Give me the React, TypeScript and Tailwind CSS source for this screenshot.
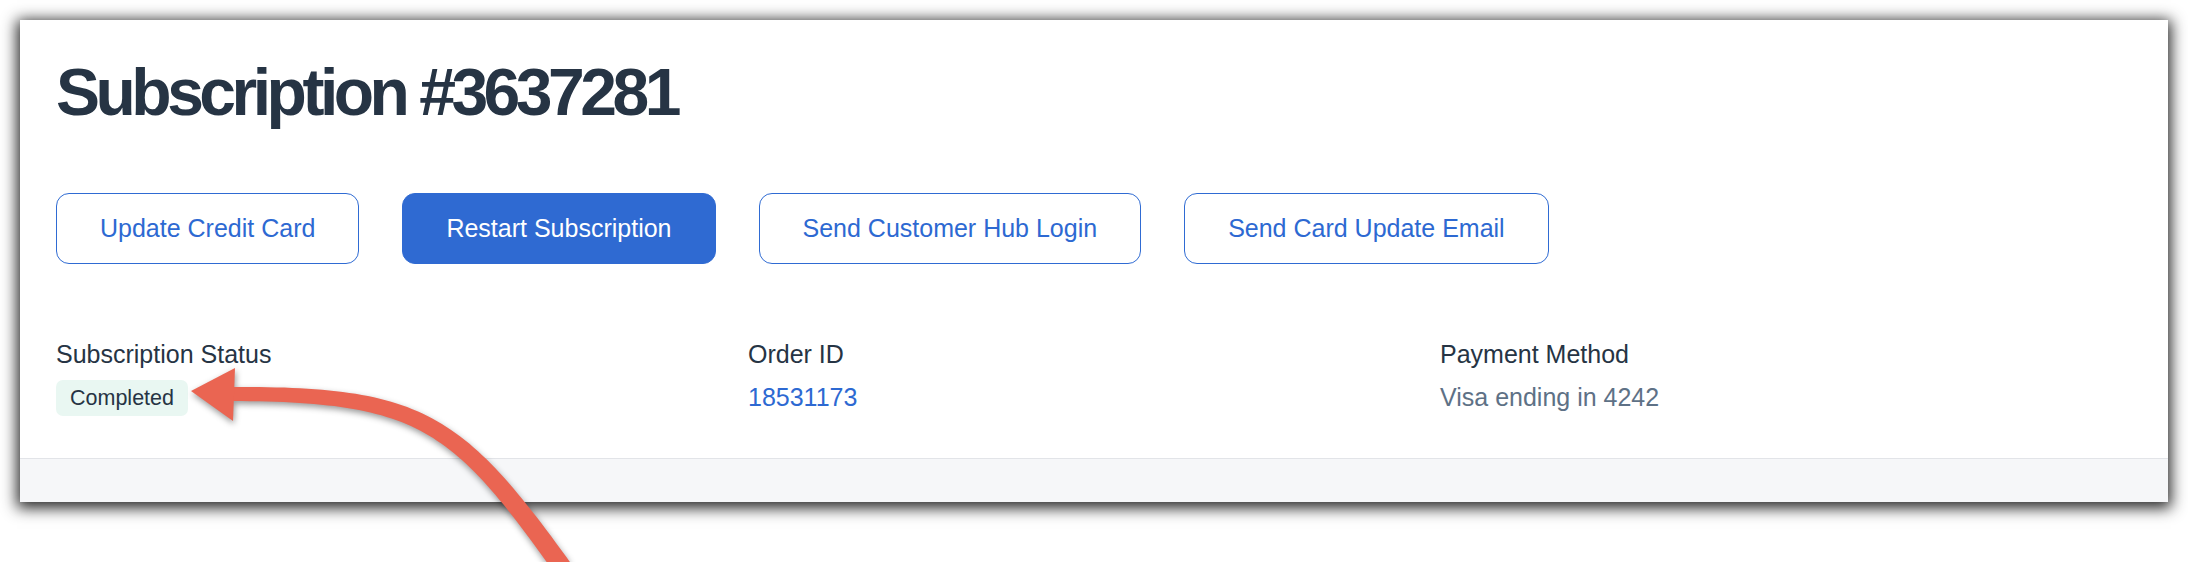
import React from "react";

type P = [number, number];

function arrowPath(): string {
  const p0: P = [564, 570];
  const p1: P = [457, 420];
  const p2: P = [420, 394];
  const p3: P = [232, 394];
  const left: P[] = [];
  const right: P[] = [];
  const N = 60;
  for (let i = 0; i <= N; i++) {
    const t = i / N;
    const mt = 1 - t;
    const x = mt * mt * mt * p0[0] + 3 * mt * mt * t * p1[0] + 3 * mt * t * t * p2[0] + t * t * t * p3[0];
    const y = mt * mt * mt * p0[1] + 3 * mt * mt * t * p1[1] + 3 * mt * t * t * p2[1] + t * t * t * p3[1];
    const dx = 3 * mt * mt * (p1[0] - p0[0]) + 6 * mt * t * (p2[0] - p1[0]) + 3 * t * t * (p3[0] - p2[0]);
    const dy = 3 * mt * mt * (p1[1] - p0[1]) + 6 * mt * t * (p2[1] - p1[1]) + 3 * t * t * (p3[1] - p2[1]);
    const len = Math.hypot(dx, dy) || 1;
    const nx = -dy / len;
    const ny = dx / len;
    const w = (19 - 5 * t) / 2;
    left.push([x + nx * w, y + ny * w]);
    right.push([x - nx * w, y - ny * w]);
  }
  const pts = [...left, ...right.reverse()];
  return "M" + pts.map((p) => `${p[0].toFixed(1)} ${p[1].toFixed(1)}`).join(" L") + " Z";
}

function Label({ children }: { children: React.ReactNode }) {
  return <div className="text-[25px] leading-[30px] text-[#263444]">{children}</div>;
}

export default function App() {
  const d = arrowPath();
  return (
    <div
      className="relative w-full h-[562px] bg-white overflow-hidden"
      style={{ fontFamily: '"Liberation Sans", Arial, Helvetica, sans-serif' }}
    >
      <div className="mx-[20px] mt-[20px] bg-white shadow-[0_3px_14px_3px_rgba(0,0,0,0.85)]">
        <div className="px-[36px] pt-[39px] pb-[42px]">
          <h1 className="text-[66px] leading-[66px] font-bold tracking-[-4.5px] text-[#263444]">
            Subscription #3637281
          </h1>
          <div className="mt-[68px] flex gap-[43px]">
            <button className="h-[71px] px-[43px] border border-[#2f6bd3] rounded-[13px] text-[25px] text-[#2d69d2] bg-white">
              Update Credit Card
            </button>
            <button className="h-[71px] px-[43px] border border-[#2f6ad2] rounded-[13px] text-[25px] text-white bg-[#2f6ad2]">
              Restart Subscription
            </button>
            <button className="h-[71px] px-[43px] border border-[#2f6bd3] rounded-[13px] text-[25px] text-[#2d69d2] bg-white">
              Send Customer Hub Login
            </button>
            <button className="h-[71px] px-[43px] border border-[#2f6bd3] rounded-[13px] text-[25px] text-[#2d69d2] bg-white">
              Send Card Update Email
            </button>
          </div>
          <div className="mt-[75px] grid grid-cols-3">
            <div>
              <Label>Subscription Status</Label>
              <div className="mt-[11px] inline-flex h-[36px] items-center px-[14px] rounded-[7px] bg-[#e9f7f2] text-[21.5px] text-[#263444]">
                Completed
              </div>
            </div>
            <div>
              <Label>Order ID</Label>
              <div className="mt-[13px] text-[25px] leading-[30px] text-[#2d69d2]">18531173</div>
            </div>
            <div>
              <Label>Payment Method</Label>
              <div className="mt-[13px] text-[25px] leading-[30px] text-[#5e7186]">Visa ending in 4242</div>
            </div>
          </div>
        </div>
        <div className="h-[44px] border-t border-[#e2e4e8] bg-[#f6f7f9]" />
      </div>
      <svg
        className="absolute left-0 top-0 pointer-events-none drop-shadow-[1px_3px_3px_rgba(0,0,0,0.4)]"
        width="2188"
        height="562"
        viewBox="0 0 2188 562"
      >
        <path d={d} fill="#ea6552" />
        <polygon points="191,391 235,368 233,421" fill="#ea6552" />
      </svg>
    </div>
  );
}
